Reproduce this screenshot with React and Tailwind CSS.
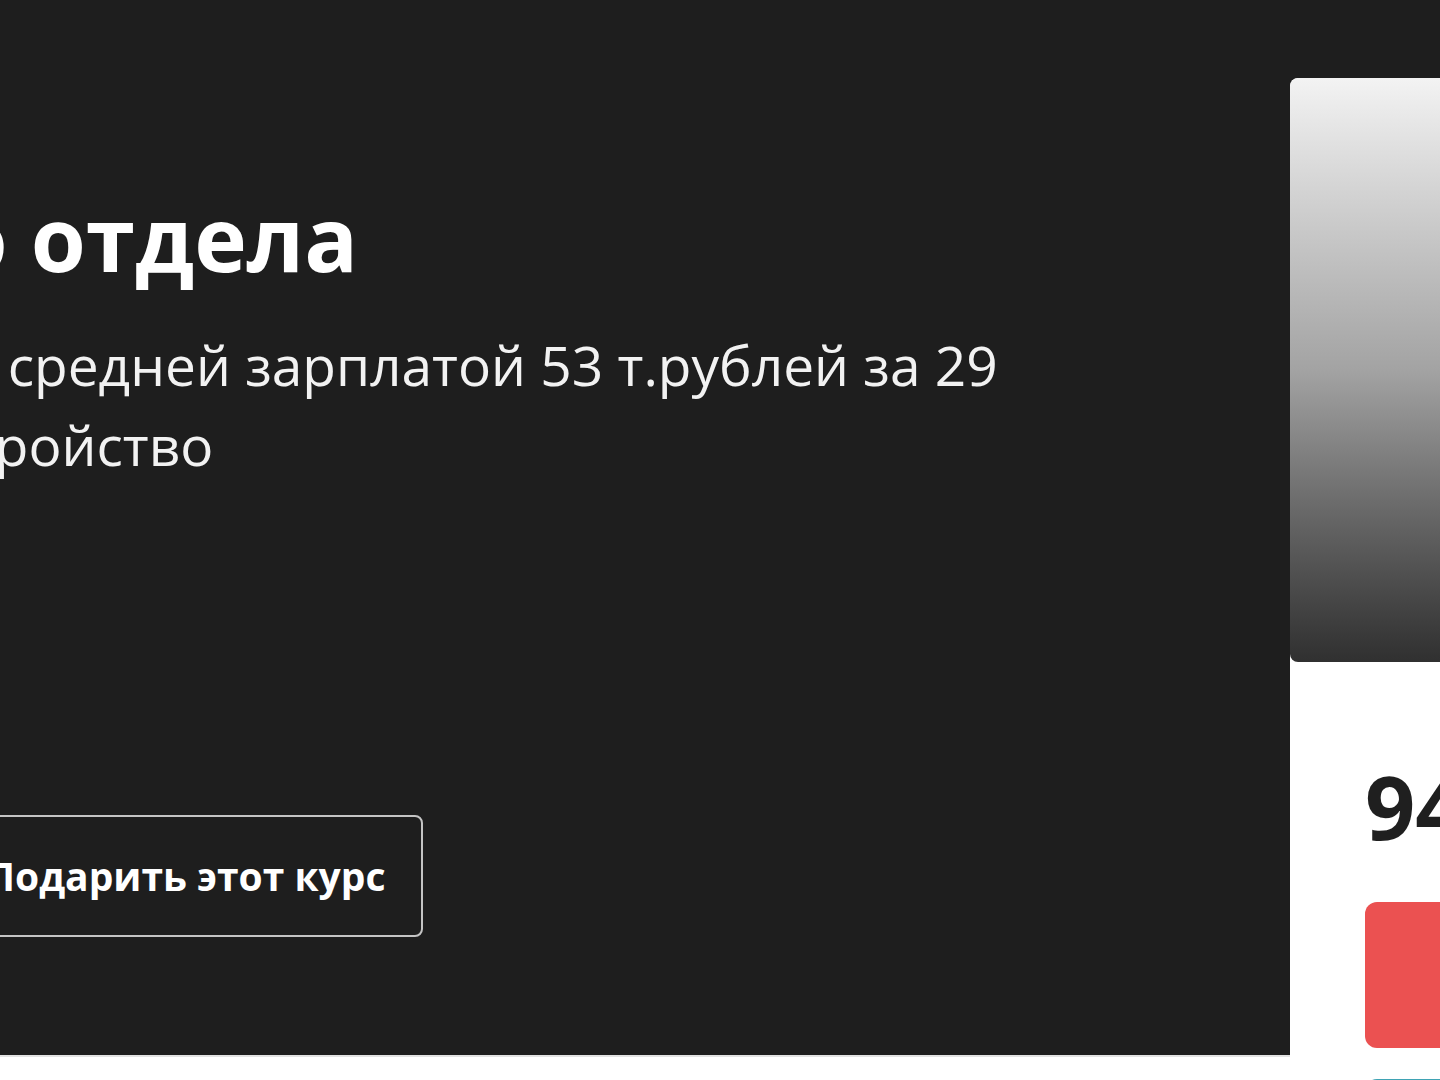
import React from "react";

const Hero = () => {
    return (
        <section className="h-[1057px] bg-[#1e1e1e] overflow-hidden border-b-2 border-[#e2e2e2] text-white">
            <div className="pt-[183px]">
                <h1 className="-ml-[90px] whitespace-nowrap text-[89px] font-bold leading-[110px]">
                    го отдела
                </h1>
                <div className="mt-[32px] text-[55px] leading-[80px] whitespace-nowrap text-[#f2f2f2]">
                    <p className="-ml-[66px]">со средней зарплатой 53 т.рублей за 29</p>
                    <p className="-ml-[85px]">устройство</p>
                </div>
                <div className="mt-[330px] -ml-[48px] flex">
                    <button className="h-[122px] border-2 border-[#c4c4c4] rounded-lg pl-[32px] pr-[35px] text-[39px] font-bold text-white">
                        Подарить этот курс
                    </button>
                </div>
            </div>
        </section>
    );
};

const PriceCard = () => {
    return (
        <aside className="absolute left-[1290px] top-[78px] w-[420px] bg-white rounded-lg overflow-hidden">
            <div className="h-[584px] rounded-lg bg-gradient-to-b from-[#f3f3f3] via-[#a3a3a3] to-[#303030]"></div>
            <div className="pl-[75px] pt-[100px]">
                <div className="text-[88px] font-bold leading-[88px] text-[#1f1f1f] whitespace-nowrap">94 900 ₽</div>
                <button className="mt-[52px] h-[146px] w-[330px] rounded-[12px] bg-[#eb5151]"></button>
                <button className="mt-[25px] h-[100px] w-[330px] rounded-[12px] border-2 border-[#3fa3b4]"></button>
            </div>
        </aside>
    );
};

export default function App() {
    return (
        <div className="relative w-[1440px] h-[1080px] overflow-hidden bg-white font-['Open_Sans',sans-serif]">
            <Hero/>
            <PriceCard/>
        </div>
    );
}
